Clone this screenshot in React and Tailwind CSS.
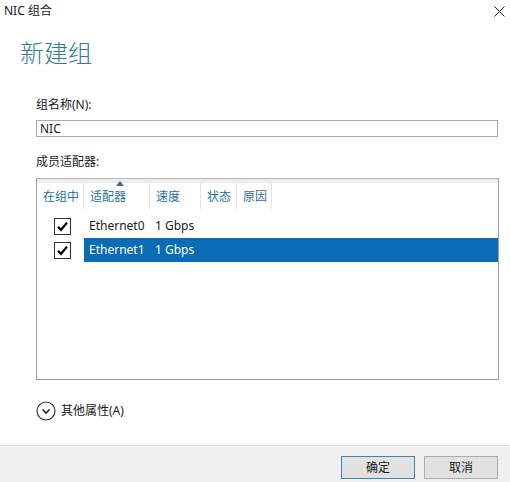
import { useState } from 'react';

const adapters = [
  { name: 'Ethernet0', speed: '1 Gbps', inTeam: true },
  { name: 'Ethernet1', speed: '1 Gbps', inTeam: true },
];

const columns = [
  { label: '在组中', width: 'w-[47px]' },
  { label: '适配器', width: 'w-[66px]', sorted: true },
  { label: '速度', width: 'w-[51px]' },
  { label: '状态', width: 'w-[36px]' },
  { label: '原因', width: 'w-[35px]' },
];

function CheckBox({ checked }) {
  return (
    <div className="w-[17px] h-[17px] border border-[#333333] bg-white flex items-center justify-center">
      {checked && (
        <svg width="13" height="13" viewBox="0 0 13 13">
          <path d="M2 6.8 L5 9.8 L11 2.8" fill="none" stroke="#000" strokeWidth="2.2" />
        </svg>
      )}
    </div>
  );
}

export default function App() {
  const [selected, setSelected] = useState(1);

  return (
    <div
      className="w-[510px] h-[482px] bg-white flex flex-col overflow-hidden text-[#1a1a1a]"
      style={{ fontFamily: '"Noto Sans", "Noto Sans CJK SC", sans-serif' }}
    >
      {/* Title bar */}
      <div className="h-[22px] flex items-center justify-between pl-[4px] pr-[5px]">
        <span className="text-[12px] leading-[16px]">NIC 组合</span>
        <svg width="11" height="11" viewBox="0 0 11 11">
          <path d="M0.5 0.5 L10.5 10.5 M10.5 0.5 L0.5 10.5" stroke="#222" strokeWidth="1" />
        </svg>
      </div>

      {/* Heading */}
      <div className="pl-[20px] pt-[15px] h-[60px]">
        <h1 className="text-[24px] leading-[31px] font-light text-[#30799a]">新建组</h1>
      </div>

      <div className="pl-[36px]">
        <div className="mt-[14px] text-[12px] leading-[18px]">组名称(N):</div>
        <input
          className="mt-[6px] w-[462px] h-[17px] border border-[#a9a9a9] px-[3px] text-[12px] leading-[15px] outline-none"
          defaultValue="NIC"
        />

        <div className="mt-[14px] text-[12px] leading-[18px]">成员适配器:</div>

        {/* Member adapters list */}
        <div className="mt-[7px] w-[463px] h-[202px] border border-[#a0a0a0] border-t-[#b5b5b5]">
          <div className="h-[30px] flex border-t-[4px] border-[#ececec]">
            {columns.map((col) => (
              <div
                key={col.label}
                className={`${col.width} relative border-r border-[#e3e3e3] pl-[6px] pt-[6px] text-[12px] leading-[16px] text-[#2a6fa3]`}
              >
                {col.sorted && (
                  <svg className="absolute left-[32px] top-[-2px]" width="8" height="5" viewBox="0 0 8 5">
                    <path d="M0 5 L4 0 L8 5 Z" fill="#3c6e8f" />
                  </svg>
                )}
                {col.label}
              </div>
            ))}
          </div>

          <div className="mt-[5px]">
            {adapters.map((a, i) => (
              <div key={a.name} className="h-[24px] flex items-center" onClick={() => setSelected(i)}>
                <div className="w-[47px] flex justify-center pl-[3px]">
                  <CheckBox checked={a.inTeam} />
                </div>
                <div
                  className={`flex-1 h-full flex items-center text-[12px] ${
                    selected === i ? 'bg-[#0a6cb4] text-white' : ''
                  }`}
                >
                  <span className="w-[66px] pl-[5px]">{a.name}</span>
                  <span className="pl-[5px]">{a.speed}</span>
                </div>
              </div>
            ))}
          </div>
        </div>

        {/* Additional properties */}
        <div className="mt-[20px] h-[22px] flex items-center gap-[5px] text-[12px]">
          <svg width="20" height="20" viewBox="0 0 20 20">
            <circle cx="10" cy="10" r="9" fill="none" stroke="#333" strokeWidth="1.2" />
            <path d="M6.5 8.5 L10 12 L13.5 8.5" fill="none" stroke="#222" strokeWidth="1.6" />
          </svg>
          <span>其他属性(A)</span>
        </div>
      </div>

      {/* Footer buttons */}
      <div className="mt-auto h-[37px] bg-[#f0f0f0] border-t border-[#dfdfdf] flex justify-end items-start gap-[9px] pt-[10px] pr-[12px]">
        <button className="w-[74px] h-[23px] bg-[#e1e1e1] border border-[#3c83b8] text-[12px] leading-[21px]">
          确定
        </button>
        <button className="w-[74px] h-[23px] bg-[#e1e1e1] border border-[#adadad] text-[12px] leading-[21px]">
          取消
        </button>
      </div>
    </div>
  );
}
